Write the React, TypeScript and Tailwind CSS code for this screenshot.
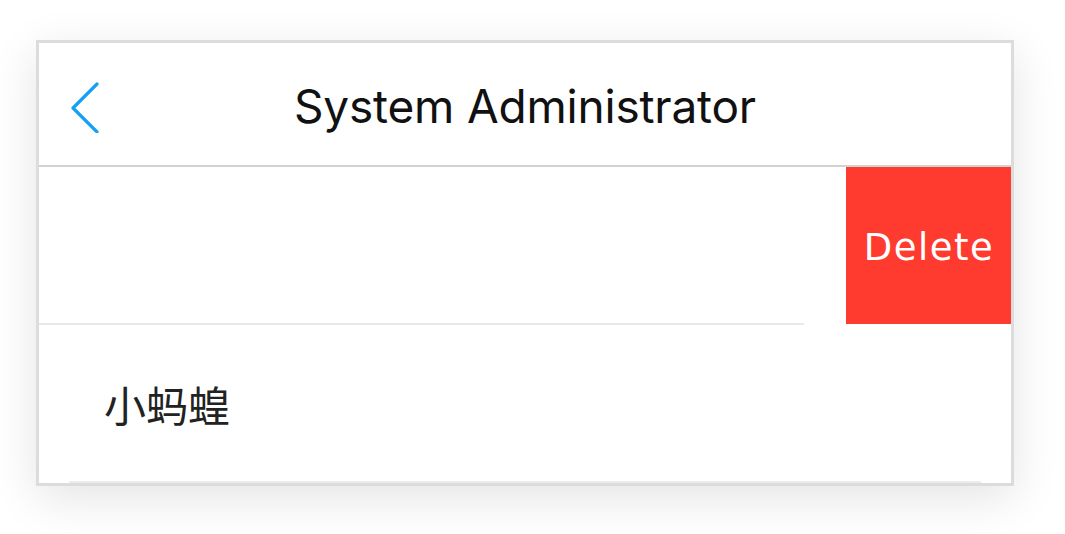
export default function App() {
  return (
    <div className="min-h-[534px] w-[1065px] bg-white pl-[36px] pt-[40px]">
      <div className="flex h-[446px] w-[978px] flex-col border-[3px] border-[#dcdcdc] bg-white shadow-[0_12px_44px_rgba(0,0,0,0.11)]">
        <header className="relative flex h-[124px] shrink-0 items-center justify-center border-b-2 border-[#d2d2d2] pt-[5px]">
          <button className="absolute left-[26px] top-[34px] text-[#15a1f3]">
            <svg width="40" height="56" viewBox="0 0 40 56" fill="none">
              <path
                d="M32 7 L8 31 L32 55"
                stroke="currentColor"
                strokeWidth="3.2"
                strokeLinecap="round"
                strokeLinejoin="round"
              />
            </svg>
          </button>
          <h1 className="font-['Inter',sans-serif] text-[46px] font-normal tracking-[-0.2px] text-[#111]">
            System Administrator
          </h1>
        </header>

        <div className="flex h-[158px] shrink-0">
          <div className="mr-[42px] flex-1 border-b-2 border-[#e8e8e8]" />
          <button className="flex h-[157px] w-[165px] items-center justify-center bg-[#ff3b30] pt-[4px] pl-[1px] font-['DejaVu_Sans',sans-serif] text-[37px] tracking-[1.5px] text-white">
            Delete
          </button>
        </div>

        <div className="flex flex-1 flex-col">
          <div className="flex flex-1 items-center pl-[65px] font-['Noto_Sans_CJK_SC',sans-serif] text-[42px] text-[#222]">
            小蚂蝗
          </div>
          <div className="mx-[30px] h-[2px] bg-[#ececec]" />
        </div>
      </div>
    </div>
  );
}
